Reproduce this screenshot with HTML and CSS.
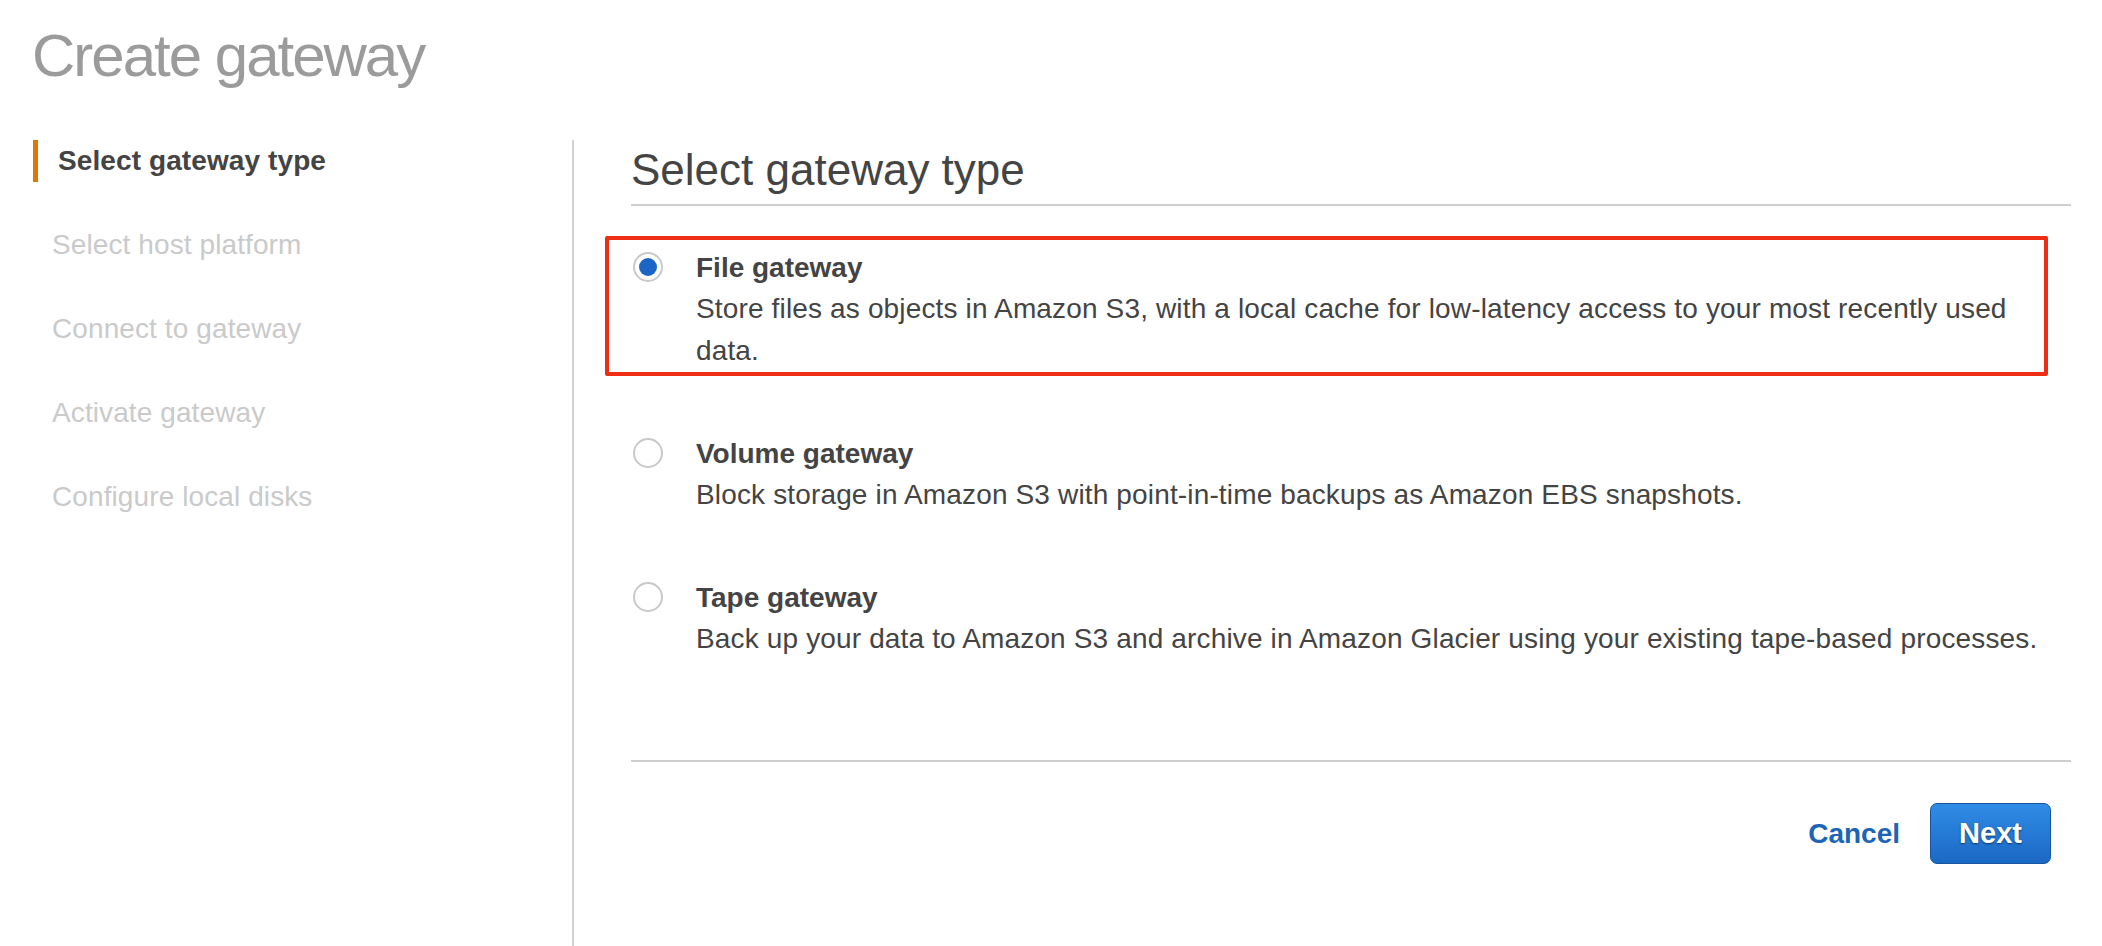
FILE: index.html
```html
<!DOCTYPE html>
<html lang="en">
<head>
<meta charset="utf-8">
<title>Create gateway</title>
<link rel="stylesheet" href="styles.css">
</head>
<body>
<div class="page">
  <h1 class="page-title">Create gateway</h1>
  <div class="layout">
    <nav class="steps">
      <div class="step step-active">Select gateway type</div>
      <div class="step">Select host platform</div>
      <div class="step">Connect to gateway</div>
      <div class="step">Activate gateway</div>
      <div class="step">Configure local disks</div>
    </nav>
    <main class="main">
      <h2 class="section-title">Select gateway type</h2>
      <div class="options">
        <div class="option option-highlight">
          <span class="radio radio-checked"></span>
          <div class="option-body">
            <div class="option-title">File gateway</div>
            <div class="option-desc">Store files as objects in Amazon S3, with a local cache for low-latency access to your most recently used data.</div>
          </div>
        </div>
        <div class="option">
          <span class="radio"></span>
          <div class="option-body">
            <div class="option-title">Volume gateway</div>
            <div class="option-desc">Block storage in Amazon S3 with point-in-time backups as Amazon EBS snapshots.</div>
          </div>
        </div>
        <div class="option">
          <span class="radio"></span>
          <div class="option-body">
            <div class="option-title">Tape gateway</div>
            <div class="option-desc">Back up your data to Amazon S3 and archive in Amazon Glacier using your existing tape-based processes.</div>
          </div>
        </div>
      </div>
      <div class="footer">
        <a class="cancel">Cancel</a>
        <button class="btn-next" type="button">Next</button>
      </div>
    </main>
  </div>
</div>
</body>
</html>
```
FILE: styles.css
```css
* { box-sizing: border-box; }

html, body {
  margin: 0;
  padding: 0;
  background: #ffffff;
}

body {
  font-family: "Liberation Sans", Arial, sans-serif;
  color: #444444;
}

.page {
  min-height: 100vh;
  display: flex;
  flex-direction: column;
}

.page-title {
  margin: 18px 0 46px 0;
  padding-left: 32px;
  font-family: "Liberation Sans", Arial, sans-serif;
  font-weight: normal;
  font-size: 60px;
  letter-spacing: -2px;
  line-height: 76px;
  color: #9b9b9b;
}

.layout {
  flex: 1;
  display: grid;
  grid-template-columns: 572px 1fr;
}

.steps {
  display: flex;
  flex-direction: column;
  gap: 42px;
  padding-left: 33px;
}

.step {
  font-size: 28px;
  line-height: 42px;
  height: 42px;
  padding-left: 19px;
  color: #cacaca;
  white-space: nowrap;
  letter-spacing: 0.1px;
}

.step-active {
  border-left: 5px solid #e07800;
  padding-left: 20px;
  font-weight: bold;
  color: #444444;
}

.main {
  border-left: 2px solid #d2d2d2;
  padding: 0 31px 0 57px;
}

.section-title {
  margin: 4px 0 0 0;
  padding-bottom: 8px;
  border-bottom: 2px solid #cfcfcf;
  font-weight: normal;
  font-size: 44px;
  line-height: 52px;
  color: #444444;
}

.options {
  margin: 30px 23px 0 -26px;
  display: flex;
  flex-direction: column;
  gap: 46px;
  padding-bottom: 96px;
}

.option {
  display: grid;
  grid-template-columns: 30px 1fr;
  column-gap: 33px;
  align-items: start;
  border: 4px solid transparent;
  padding: 8px 0 0 24px;
}

.option-highlight {
  border-color: #ee2e14;
  border-radius: 2px;
}

.radio {
  position: relative;
  display: block;
  width: 30px;
  height: 30px;
  margin-top: 4px;
  border: 2px solid #c9c9c9;
  border-radius: 50%;
  background: #ffffff;
}

.radio-checked::after {
  content: "";
  position: absolute;
  left: 4px;
  top: 4px;
  width: 18px;
  height: 18px;
  border-radius: 50%;
  background: #1b66c4;
}

.option-title {
  font-size: 28px;
  line-height: 40px;
  font-weight: bold;
  color: #444444;
}

.option-desc {
  font-size: 28px;
  line-height: 42px;
  letter-spacing: 0.15px;
  color: #444444;
}

.footer {
  border-top: 2px solid #cfcfcf;
  padding-top: 41px;
  padding-right: 20px;
  display: flex;
  justify-content: flex-end;
  align-items: center;
  gap: 30px;
}

.cancel {
  font-size: 28px;
  font-weight: bold;
  color: #1c64b6;
  cursor: pointer;
}

.btn-next {
  width: 121px;
  height: 61px;
  padding: 0;
  border: 1px solid #16569e;
  border-radius: 7px;
  background: linear-gradient(to bottom, #2f8ce6 0%, #1b68c4 100%);
  color: #ffffff;
  font-family: "Liberation Sans", Arial, sans-serif;
  font-size: 29px;
  font-weight: bold;
  text-shadow: 0 1px 2px rgba(0, 0, 0, 0.55);
  cursor: pointer;
}
```
